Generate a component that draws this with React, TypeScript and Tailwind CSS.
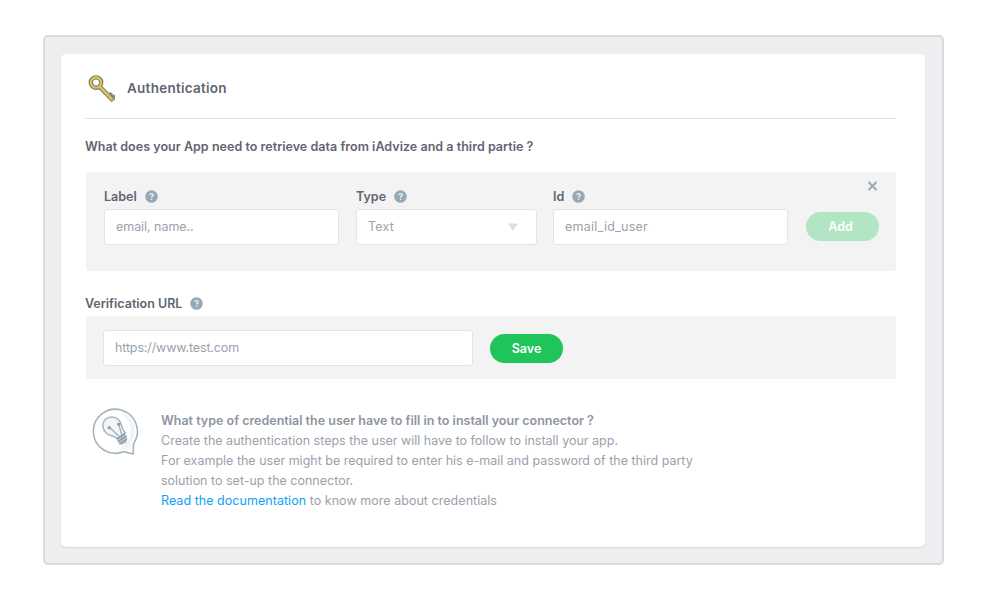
import React from "react";

function Help() {
  return (
    <svg width="13" height="13" viewBox="0 0 13 13" className="mb-[2px] shrink-0">
      <circle cx="6.5" cy="6.5" r="6.3" fill="#98a9b6" />
      <path d="M4.9 5.1c0-2 3.3-2 3.3-.1 0 1.2-1.6 1.1-1.6 2.4" fill="none" stroke="#f0f3f5" strokeWidth="1.3" />
      <circle cx="6.6" cy="9.2" r=".8" fill="#f0f3f5" />
    </svg>
  );
}

function KeyIcon() {
  return (
    <svg width="30" height="30" viewBox="0 0 30 30" className="shrink-0">
      <g fill="none" stroke="#6b828c">
        <circle cx="11" cy="9.6" r="5.2" strokeWidth="4.4" />
        <path d="M14.7 13.8 28.4 27.7" strokeWidth="4.6" />
        <path d="M23.6 23.6 27 20.4M26.7 26.4 30.4 23" strokeWidth="4" />
      </g>
      <g fill="none" stroke="#ecc440">
        <circle cx="11" cy="9.6" r="5.2" strokeWidth="2.1" />
        <path d="M14.8 13.9 27.9 27.2" strokeWidth="2.4" />
      </g>
      <path d="M24.6 22.6 26.4 20.9M27.4 25.8 29.6 23.8" fill="none" stroke="#a49b55" strokeWidth="1.4" />
    </svg>
  );
}

function BulbIcon() {
  return (
    <svg width="48" height="48" viewBox="0 0 48 48" className="shrink-0">
      <path d="M28 4.5a20 20 0 0 1 10.5 31.7l.6 7.3-8-1.5-7 1.3C42 36 44 17 28 4.5" fill="#f1f4f6" />
      <path d="M41.6 36.6A22 22 0 1 0 31.8 44.6Q36 46.2 41.2 47Z" fill="none" stroke="#a5b5be" strokeWidth="1.6" strokeLinejoin="round" />
      <path d="M25.5 32.2c-1.8-3.8-7.7-2.5-11.6-6.5-4-4-4-9.9-.6-13.2 3.7-3.7 9.8-3.2 13.3.3 4.2 4.2 2.3 9.5 6.5 12.7Z" fill="#f3f6f8" stroke="#a8b7c0" strokeWidth="1.6" />
      <path d="M28 30 17.5 20.5M29.8 28.5 26.8 17.1" fill="none" stroke="#9aabb6" strokeWidth="1.2" />
      <circle cx="17.2" cy="20.7" r="1.7" fill="#8fa2af" />
      <circle cx="26.7" cy="17.3" r="1.7" fill="#8fa2af" />
      <path d="m24.7 31.5 8.2-6 2.4 6-1 4.2-4.5 2.2-3.1-1.2Z" fill="#b9c5cc" />
      <path d="m24.8 32 8.4-5.2M26 34.5l8.5-5.2M27.5 37l7.3-4.4" stroke="#8295a1" strokeWidth="1.2" />
    </svg>
  );
}

const field = "flex h-9 items-center rounded-[3px] border border-[#e3e4e6] bg-white px-[11px] text-[12.5px] text-[#9ba1ad]";
const label = "mb-[2px] flex h-5 items-center gap-2 font-semibold";

export default function App() {
  return (
    <div className="h-[602px] w-[986px] bg-white px-[43px] pt-[35px] font-[Inter,sans-serif] text-[12.5px] text-[#5f6571]">
      <main className="h-[530px] w-[901px] rounded-[5px] border-2 border-[#d9dade] bg-[#edeef0] pt-[17px] pl-4">
        <section className="h-[493px] w-[864px] rounded-[5px] bg-white pr-[29px] pl-6 shadow-[0_1px_1px_#d6d8dc]">
          <header className="flex h-[65px] items-center gap-3 border-b border-[#e0e2e4] pt-[3px]">
            <KeyIcon />
            <h1 className="pt-[2px] text-[13.5px] font-semibold tracking-[0.25px]">Authentication</h1>
          </header>
          <h2 className="mt-[18px] h-5 leading-5 font-semibold tracking-[0.03px] whitespace-nowrap">
            What does your App need to retrieve data from iAdvize and a third partie ?
          </h2>
          <div className="mt-[15px] ml-px flex h-[99px] rounded-[3px] bg-[#f3f3f3] pt-[15px] pl-[18px]">
            <div className="w-[235px]">
              <label className={label}>Label <Help /></label>
              <div className={field + " tracking-[-0.05px]"}>email, name..</div>
            </div>
            <div className="ml-[17px] w-[181px]">
              <label className={label}>Type <Help /></label>
              <div className={field + " justify-between pr-[18px] tracking-[0.2px]"}>
                Text
                <svg width="10" height="8" viewBox="0 0 10 8"><path d="M0 .5h10L5 8Z" fill="#dcdfe2" /></svg>
              </div>
            </div>
            <div className="ml-4 w-[235px]">
              <label className={label}>Id <Help /></label>
              <div className={field + " tracking-[0.25px]"}>email_id_user</div>
            </div>
            <div className="ml-[18px] flex w-[73px] flex-col items-end">
              <svg width="12" height="10" viewBox="0 0 12 10" className="-mt-[6px]"><path d="m1.5 1 8 8M9.5 1l-8 8" stroke="#97a7b3" strokeWidth="1.8" /></svg>
              <button className="mt-[21px] h-[29px] w-[73px] rounded-full bg-[#b1e5c3] pt-[2px] pr-1 font-semibold text-white">Add</button>
            </div>
          </div>
          <div className="mt-[22px] flex h-[22px] items-center gap-2 font-semibold">
            <span className="pt-px">Verification URL</span> <Help />
          </div>
          <div className="mt-px ml-px flex h-[63px] items-center gap-[17px] rounded-[3px] bg-[#f3f3f3] pl-[17px]">
            <div className={field + " w-[370px] pt-[2px] tracking-[-0.13px]"}>https://www.test.com</div>
            <button className="mt-px h-[29px] w-[73px] rounded-full bg-[#20c55a] pt-[2px] font-semibold text-white">Save</button>
          </div>
          <div className="mt-7 flex pl-[7px] leading-5 whitespace-nowrap text-[#9ba1ab]">
            <BulbIcon />
            <div className="ml-[21px] pt-1">
              <h3 className="font-semibold text-[#8d95a1]">What type of credential the user have to fill in to install your connector ?</h3>
              <p>Create the authentication steps the user will have to follow to install your app.</p>
              <p>For example the user might be required to enter his e-mail and password of the third party</p>
              <p>solution to set-up the connector.</p>
              <p className="tracking-[0.04px]"><a className="text-[#10a0f8]">Read the documentation</a> to know more about credentials</p>
            </div>
          </div>
        </section>
      </main>
    </div>
  );
}
